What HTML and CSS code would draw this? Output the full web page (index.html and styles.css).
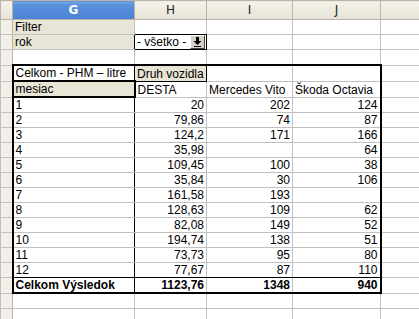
FILE: index.html
```html
<!DOCTYPE html>
<html lang="sk">
<head>
<meta charset="UTF-8">
<title>PHM – kontingenčná tabuľka</title>
<link rel="stylesheet" href="styles.css">
</head>
<body>
<table class="sheet">
  <colgroup>
    <col class="c-row"><col class="c-g"><col class="c-h"><col class="c-i"><col class="c-j"><col class="c-k">
  </colgroup>
  <thead>
    <tr><th class="corner"></th><th class="sel">G</th><th>H</th><th>I</th><th>J</th><th></th></tr>
  </thead>
  <tbody>
    <tr><th></th><td class="field">Filter</td><td class="pick-above"></td><td></td><td></td><td></td></tr>
    <tr><th></th><td class="field pick-left">rok</td><td class="pick"><div class="picker"><span class="picker-val">- všetko -</span><span class="picker-btn"><svg width="9" height="10" viewBox="0 0 9 10"><rect x="3" y="0" width="3" height="4"/><polygon points="0.5,4 8.5,4 4.5,8"/><rect x="1" y="9" width="7" height="1"/></svg></span></div></td><td></td><td></td><td></td></tr>
    <tr><th></th><td></td><td></td><td></td><td></td><td></td></tr>
    <tr><th></th><td class="pv-l pv-t">Celkom - PHM – litre</td><td class="field pv-t pv-colfield">Druh vozidla</td><td class="pv-t"></td><td class="pv-t pv-r"></td><td></td></tr>
    <tr><th></th><td class="field pv-rowfield">mesiac</td><td>DESTA</td><td>Mercedes Vito</td><td class="pv-r">Škoda Octavia</td><td></td></tr>
    <tr><th></th><td class="pv-l">1</td><td class="num">20</td><td class="num">202</td><td class="num pv-r">124</td><td></td></tr>
    <tr><th></th><td class="pv-l">2</td><td class="num">79,86</td><td class="num">74</td><td class="num pv-r">87</td><td></td></tr>
    <tr><th></th><td class="pv-l">3</td><td class="num">124,2</td><td class="num">171</td><td class="num pv-r">166</td><td></td></tr>
    <tr><th></th><td class="pv-l">4</td><td class="num">35,98</td><td class="num"></td><td class="num pv-r">64</td><td></td></tr>
    <tr><th></th><td class="pv-l">5</td><td class="num">109,45</td><td class="num">100</td><td class="num pv-r">38</td><td></td></tr>
    <tr><th></th><td class="pv-l">6</td><td class="num">35,84</td><td class="num">30</td><td class="num pv-r">106</td><td></td></tr>
    <tr><th></th><td class="pv-l">7</td><td class="num">161,58</td><td class="num">193</td><td class="num pv-r"></td><td></td></tr>
    <tr><th></th><td class="pv-l">8</td><td class="num">128,63</td><td class="num">109</td><td class="num pv-r">62</td><td></td></tr>
    <tr><th></th><td class="pv-l">9</td><td class="num">82,08</td><td class="num">149</td><td class="num pv-r">52</td><td></td></tr>
    <tr><th></th><td class="pv-l">10</td><td class="num">194,74</td><td class="num">138</td><td class="num pv-r">51</td><td></td></tr>
    <tr><th></th><td class="pv-l">11</td><td class="num">73,73</td><td class="num">95</td><td class="num pv-r">80</td><td></td></tr>
    <tr class="pv-last"><th></th><td class="pv-l">12</td><td class="num">77,67</td><td class="num">87</td><td class="num pv-r">110</td><td></td></tr>
    <tr class="pv-total"><th></th><td class="pv-l">Celkom Výsledok</td><td class="num">1123,76</td><td class="num">1348</td><td class="num pv-r">940</td><td></td></tr>
    <tr><th></th><td></td><td></td><td></td><td></td><td></td></tr>
    <tr><th></th><td></td><td></td><td></td><td></td><td></td></tr>
  </tbody>
</table>
</body>
</html>
```

FILE: styles.css
```css
:root{
  --grid:#c0c0c0;
  --head-line:#b8b5a8;
  --field-bg:#e8e4d6;
  --ink:#000;
  --font-cell:"Liberation Sans",Arial,sans-serif;
  --font-head:"DejaVu Sans",Tahoma,sans-serif;
}
html,body{margin:0;overflow:hidden;background:#fff;}
body{font-family:var(--font-cell);font-size:12px;color:var(--ink);}

/* sheet grid */
.sheet{border-collapse:collapse;table-layout:fixed;width:440px;}
.c-row{width:12px;} .c-g{width:122px;} .c-h{width:72px;} .c-i{width:86px;} .c-j{width:88px;} .c-k{width:60px;}
.sheet td,.sheet th{border:1px solid var(--grid);padding:0 2px;height:14px;line-height:13px;vertical-align:bottom;white-space:nowrap;overflow:visible;text-align:left;font-weight:normal;}
.sheet td.num{text-align:right;}

/* column + row headers */
.sheet thead th{height:18px;background:linear-gradient(#f4f2ea,#e6e3d6);border-color:var(--head-line);font-family:var(--font-head);font-size:12px;color:#222;text-align:center;vertical-align:middle;}
.sheet thead th.sel{background:linear-gradient(#7aa6e6 0,#5a8fdc 20%,#4a82d4 100%);color:#fff;font-weight:bold;}
.sheet tbody th{background:#f1efe8;border-color:var(--grid);border-right-color:var(--head-line);padding:0;}

/* pivot table fields */
.field{background:var(--field-bg);}
.pv-t{border-top:2px solid var(--ink)!important;}
.pv-l{border-left:2px solid var(--ink)!important;border-right:1px solid var(--ink)!important;}
.pv-r{border-right:2px solid var(--ink)!important;}
.pv-colfield{border-right:1px solid var(--ink)!important;border-bottom:1px solid var(--ink)!important;}
.sheet td.pv-rowfield{border:2px solid var(--ink);}
.pv-last td:not(:last-child){border-bottom:1px solid var(--ink);}
.pv-total td:not(:last-child){border-bottom:2px solid var(--ink);font-weight:bold;}

/* page field dropdown: the cell itself draws the black frame */
.sheet td.pick-above{border-bottom-color:var(--ink);}
.sheet td.pick-left{border-right-color:var(--ink);}
.sheet td.pick{padding:0;border-color:var(--ink);}
.picker{display:flex;align-items:center;justify-content:space-between;height:14px;background:#fff;padding-left:2px;}
.picker-val{line-height:13px;}
.picker-btn{display:flex;align-items:center;justify-content:center;width:15px;height:14px;box-sizing:border-box;background:#d4d0c8;border:1px solid;border-color:#fff #404040 #404040 #fff;margin-right:1px;}
.picker-btn svg{fill:#000;display:block;}
```
